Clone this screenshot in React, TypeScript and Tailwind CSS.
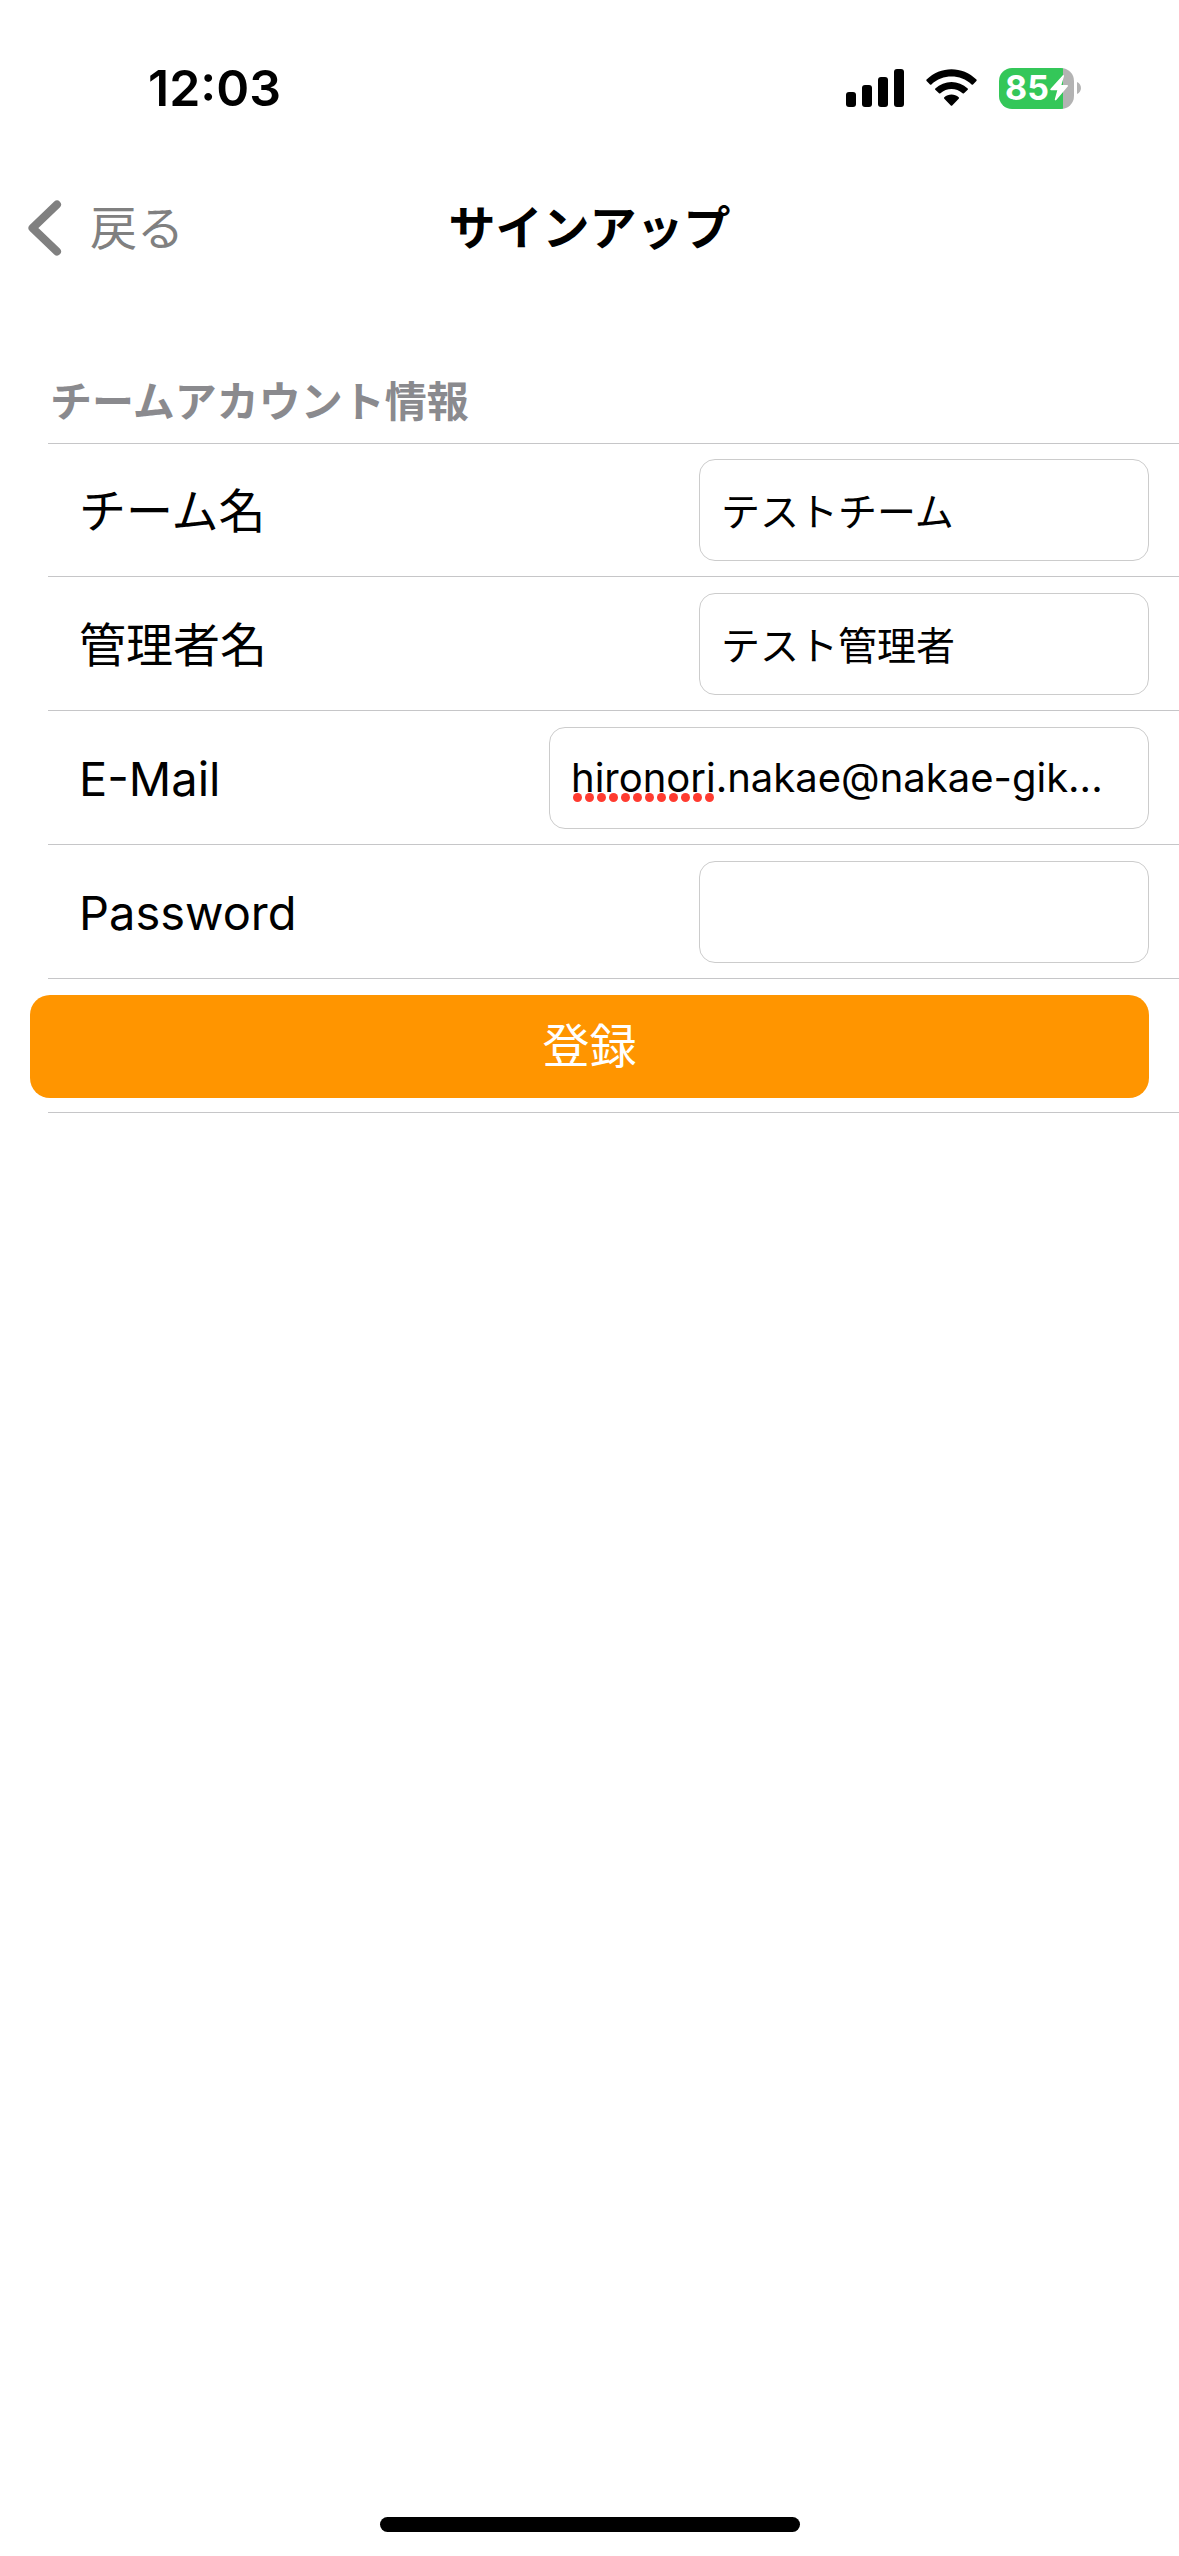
import type { ReactNode } from "react";

function SignalIcon() {
  return (
    <svg width="58" height="38" viewBox="0 0 58 38" aria-hidden="true">
      <rect x="0" y="23" width="10" height="15" rx="3" />
      <rect x="16" y="16" width="10" height="22" rx="3" />
      <rect x="32" y="8" width="10" height="30" rx="3" />
      <rect x="48" y="0" width="10" height="38" rx="3" />
    </svg>
  );
}

function WifiIcon() {
  return (
    <svg width="51" height="38" viewBox="0 0 51 38" aria-hidden="true">
      <path d="M0.6 10.6 C14.5 -3.3 36.5 -3.3 50.4 10.6 Q51 11.3 50.4 12 L47 15.4 Q46.3 16 45.6 15.4 C34.3 4.8 16.7 4.8 5.4 15.4 Q4.7 16 4 15.4 L0.6 12 Q0 11.3 0.6 10.6 Z" />
      <path d="M9.3 19.4 C18.3 10.7 32.7 10.7 41.7 19.4 Q42.3 20 41.7 20.7 L38 24.3 Q37.3 24.9 36.6 24.3 C30.3 18.6 20.7 18.6 14.4 24.3 Q13.7 24.9 13 24.3 L9.3 20.7 Q8.7 20 9.3 19.4 Z" />
      <path d="M18.3 28.3 C22.4 24.7 28.6 24.7 32.7 28.3 Q33.4 29 32.7 29.7 L26.2 36.4 Q25.5 37 24.8 36.4 L18.3 29.7 Q17.6 29 18.3 28.3 Z" />
    </svg>
  );
}

function Battery() {
  return (
    <div className="flex items-center gap-[3px]">
      <div className="flex h-[41px] w-[75px] items-center justify-center gap-px overflow-hidden rounded-[13px] bg-linear-to-r from-[#34c759] from-85% to-[#b3b3b3] to-85% text-white">
        <span className="text-[34px] leading-none font-bold">85</span>
        <svg width="18" height="26" viewBox="0 0 18 26" fill="currentColor" aria-hidden="true">
          <path d="M12.6 0.4 C13.4 -0.3 14.3 0.3 14 1.3 L11.4 10 H17 C18 10 18.3 10.8 17.7 11.5 L6.3 25 C5.5 25.8 4.5 25.3 4.8 24.2 L7.3 15.3 H1.2 C0.2 15.3 -0.1 14.5 0.6 13.8 Z" />
        </svg>
      </div>
      <svg width="4" height="12" viewBox="0 0 4 12" fill="#b3b3b3" aria-hidden="true">
        <path d="M0 0 C5.3 2.4 5.3 9.6 0 12 Z" />
      </svg>
    </div>
  );
}

function BackIcon() {
  return (
    <svg width="34" height="58" viewBox="0 0 34 58" fill="none" stroke="currentColor" strokeWidth="8" strokeLinecap="round" strokeLinejoin="round" aria-hidden="true">
      <path d="M29 5.5 L4.5 29 L29 52.5" />
    </svg>
  );
}

function Separator() {
  return <div className="ml-12 h-px bg-[#c6c6c8]" />;
}

function SpellingMarks({ count }: { count: number }) {
  return (
    <div className="pointer-events-none absolute bottom-[27px] left-6 flex gap-[3px]" aria-hidden="true">
      {Array.from({ length: count }, (_, i) => (
        <span key={i} className="size-[9px] rounded-full bg-[#ff3b30]" />
      ))}
    </div>
  );
}

type FieldProps = {
  id: string;
  label: string;
  type?: string;
  value?: string;
  wide?: boolean;
  children?: ReactNode;
};

function Field({ id, label, type = "text", value, wide, children }: FieldProps) {
  return (
    <div>
      <div className="flex items-center justify-between pt-4 pr-[30px] pb-[15px] pl-[79px]">
        <label htmlFor={id} className="pt-0.5 text-[47px] leading-[60px]">
          {label}
        </label>
        <div className={wide ? "relative w-[600px] text-[40px]" : "relative w-[450px] text-[39px]"}>
          <input
            id={id}
            type={type}
            defaultValue={value}
            spellCheck={false}
            className="block h-[102px] w-full rounded-[16px] border border-[#cccccc] bg-white px-[21px] pb-0.5 text-ellipsis outline-none"
          />
          {children}
        </div>
      </div>
      <Separator />
    </div>
  );
}

export default function App() {
  return (
    <div lang="ja" className="flex min-h-screen flex-col bg-white font-['Inter','Noto_Sans_CJK_JP',sans-serif] text-black">
      <header>
        <div className="flex h-44 items-center justify-between pr-[98px] pl-[148px]">
          <time className="text-[50px] leading-none font-semibold">12:03</time>
          <div className="flex items-center gap-[22px]">
            <SignalIcon />
            <WifiIcon />
            <Battery />
          </div>
        </div>
        <nav className="grid h-[104px] grid-cols-3 items-center">
          <button type="button" className="flex items-center gap-7 pl-7 text-[47px] leading-[60px] text-[#808080]">
            <BackIcon />
            戻る
          </button>
          <h1 className="text-center text-[47px] leading-[60px] font-bold">サインアップ</h1>
        </nav>
      </header>

      <main>
        <form onSubmit={(event) => event.preventDefault()}>
          <h2 className="pt-[92px] pb-[11px] pl-[50px] text-[42px] leading-[60px] font-bold text-[#8a8a8e]">チームアカウント情報</h2>
          <Separator />
          <div className="-mt-px">
            <Field id="team" label="チーム名" value="テストチーム" />
            <Field id="admin" label="管理者名" value="テスト管理者" />
            <Field id="email" label="E-Mail" type="email" value="hironori.nakae@nakae-gik..." wide>
              <SpellingMarks count={12} />
            </Field>
            <Field id="password" label="Password" type="password" />
            <div className="px-[30px] pt-4 pb-[14px]">
              <button type="submit" className="block h-[103px] w-full rounded-[20px] bg-[#ff9500] text-[47px] text-white">
                登録
              </button>
            </div>
            <Separator />
          </div>
        </form>
      </main>

      <div className="mt-auto flex justify-center pb-6">
        <div className="h-[15px] w-[420px] rounded-full bg-black" />
      </div>
    </div>
  );
}
